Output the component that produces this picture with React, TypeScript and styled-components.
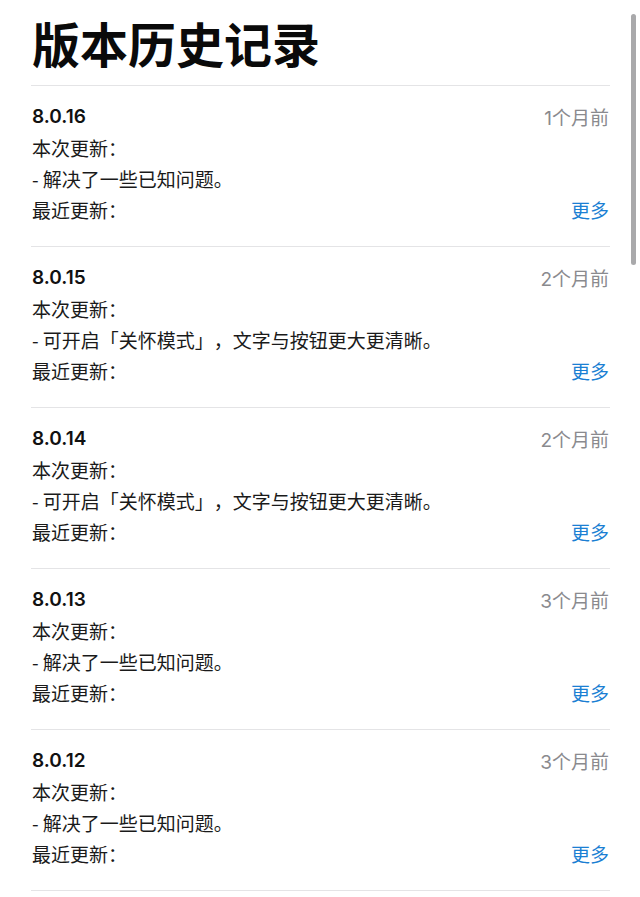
import React from 'react';
import styled, { createGlobalStyle } from 'styled-components';

const GlobalStyle = createGlobalStyle`
  html, body {
    margin: 0;
    padding: 0;
    background: #ffffff;
    overflow: hidden;
  }
  body {
    font-family: Inter, "Noto Sans CJK SC", sans-serif;
    color: #111111;
    text-spacing-trim: space-all;
    -webkit-font-smoothing: antialiased;
  }
`;

const Page = styled.div`
  width: 640px;
  height: 897px;
  box-sizing: border-box;
  padding: 0 30px 0 31px;
  position: relative;
`;

const Title = styled.h1`
  margin: 0;
  padding: 12px 0 13px 1px;
  font-family: "Noto Sans CJK SC", sans-serif;
  font-size: 48px;
  font-weight: 700;
  line-height: 60px;
  color: #0a0a0a;
  border-bottom: 1px solid #e4e4e6;
`;

const List = styled.ul`
  list-style: none;
  margin: 0;
  padding: 0;
`;

const Entry = styled.li`
  padding: 15px 0 21px 1px;
  border-bottom: 1px solid #e4e4e6;
  display: grid;
  grid-template-columns: 1fr auto;
  grid-auto-rows: 31px;
  align-items: center;
`;

const Version = styled.span`
  font-family: Inter, "Noto Sans CJK SC", sans-serif;
  font-size: 19px;
  font-weight: 600;
  color: #111111;
`;

const Age = styled.span`
  font-family: Inter, "Noto Sans CJK SC", sans-serif;
  font-size: 19px;
  color: #8a8a8e;
  text-align: right;
  margin-right: 1px;
`;

const Line = styled.span<{ $full?: boolean }>`
  font-family: "Noto Sans CJK SC", sans-serif;
  font-size: 19px;
  color: #1a1a1a;
  white-space: nowrap;
  grid-column: ${(p) => (p.$full ? '1 / -1' : 'auto')};
`;

const More = styled.a`
  font-family: "Noto Sans CJK SC", sans-serif;
  font-size: 19px;
  color: #1b7fd3;
  text-align: right;
  text-decoration: none;
  cursor: pointer;
  margin-right: 1px;
`;

const ScrollThumb = styled.div`
  position: absolute;
  top: 14px;
  right: 4px;
  width: 5px;
  height: 251px;
  border-radius: 3px;
  background: #a9a9ab;
`;

interface IRelease {
  version: string;
  age: string;
  note: string;
}

const releases: IRelease[] = [
  { version: '8.0.16', age: '1个月前', note: '- 解决了一些已知问题。' },
  { version: '8.0.15', age: '2个月前', note: '- 可开启「关怀模式」，文字与按钮更大更清晰。' },
  { version: '8.0.14', age: '2个月前', note: '- 可开启「关怀模式」，文字与按钮更大更清晰。' },
  { version: '8.0.13', age: '3个月前', note: '- 解决了一些已知问题。' },
  { version: '8.0.12', age: '3个月前', note: '- 解决了一些已知问题。' },
];

function App() {
  return (
    <>
      <GlobalStyle />
      <Page>
        <Title>版本历史记录</Title>
        <List>
          {releases.map((r) => (
            <Entry key={r.version}>
              <Version>{r.version}</Version>
              <Age>{r.age}</Age>
              <Line $full>本次更新：</Line>
              <Line $full>{r.note}</Line>
              <Line>最近更新：</Line>
              <More>更多</More>
            </Entry>
          ))}
        </List>
        <ScrollThumb />
      </Page>
    </>
  );
}

export default App;
